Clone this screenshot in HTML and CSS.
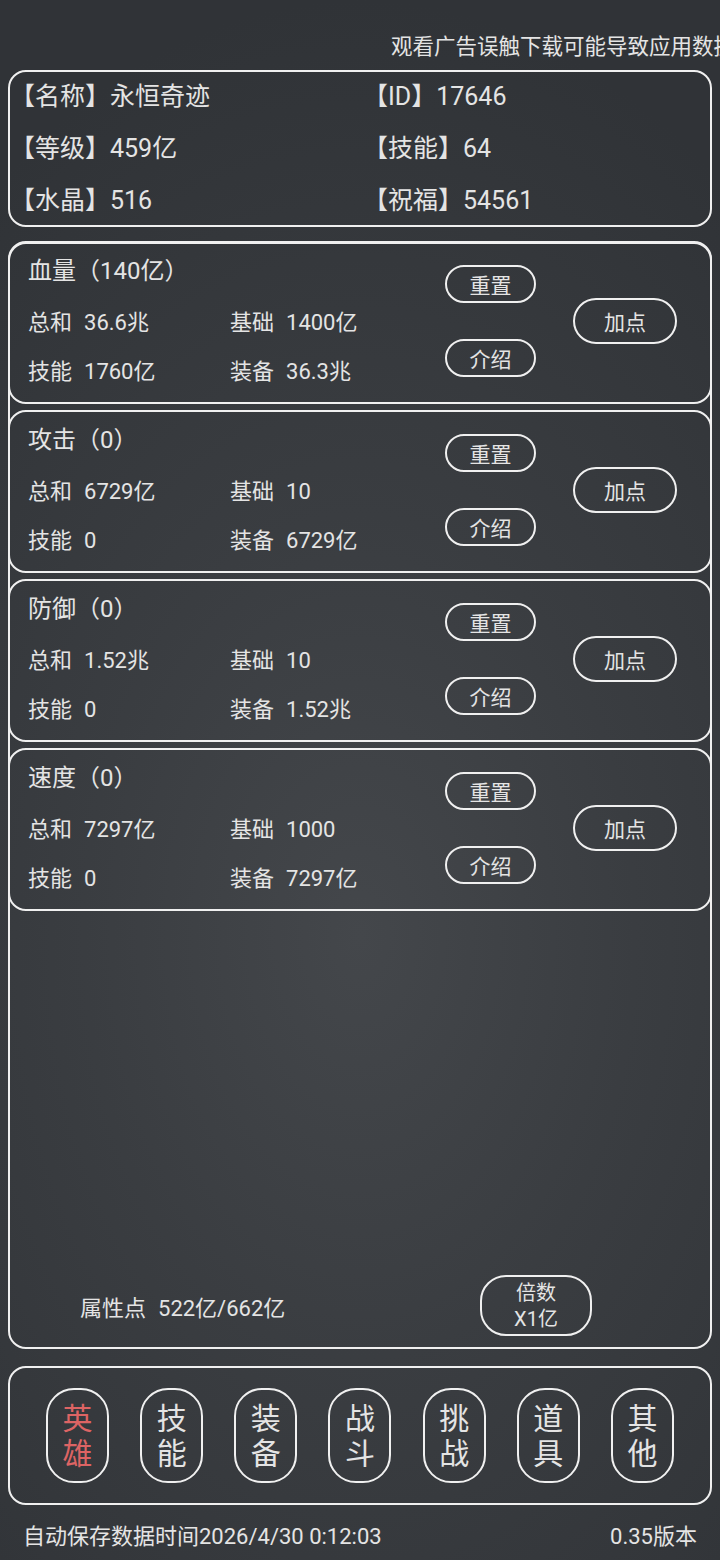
FILE: index.html
```html
<!DOCTYPE html>
<html lang="zh-CN">
<head>
<meta charset="utf-8">
<title>英雄</title>
<link rel="stylesheet" href="styles.css">
</head>
<body>
<div class="app">
  <div class="notice">观看广告误触下载可能导致应用数据丢失</div>

  <section class="info">
    <div class="info-item">【名称】永恒奇迹</div>
    <div class="info-item">【ID】17646</div>
    <div class="info-item">【等级】459亿</div>
    <div class="info-item">【技能】64</div>
    <div class="info-item">【水晶】516</div>
    <div class="info-item">【祝福】54561</div>
  </section>

  <section class="attrs">
    <div class="stat">
      <div class="stat-body">
        <div class="stat-title">血量（140亿）</div>
        <div class="stat-grid">
          <div>总和<span class="val">36.6兆</span></div>
          <div>基础<span class="val">1400亿</span></div>
          <div>技能<span class="val">1760亿</span></div>
          <div>装备<span class="val">36.3兆</span></div>
        </div>
      </div>
      <div class="stat-btns">
        <div class="pill">重置</div>
        <div class="pill">介绍</div>
      </div>
      <div class="pill pill-lg">加点</div>
    </div>

    <div class="stat">
      <div class="stat-body">
        <div class="stat-title">攻击（0）</div>
        <div class="stat-grid">
          <div>总和<span class="val">6729亿</span></div>
          <div>基础<span class="val">10</span></div>
          <div>技能<span class="val">0</span></div>
          <div>装备<span class="val">6729亿</span></div>
        </div>
      </div>
      <div class="stat-btns">
        <div class="pill">重置</div>
        <div class="pill">介绍</div>
      </div>
      <div class="pill pill-lg">加点</div>
    </div>

    <div class="stat">
      <div class="stat-body">
        <div class="stat-title">防御（0）</div>
        <div class="stat-grid">
          <div>总和<span class="val">1.52兆</span></div>
          <div>基础<span class="val">10</span></div>
          <div>技能<span class="val">0</span></div>
          <div>装备<span class="val">1.52兆</span></div>
        </div>
      </div>
      <div class="stat-btns">
        <div class="pill">重置</div>
        <div class="pill">介绍</div>
      </div>
      <div class="pill pill-lg">加点</div>
    </div>

    <div class="stat">
      <div class="stat-body">
        <div class="stat-title">速度（0）</div>
        <div class="stat-grid">
          <div>总和<span class="val">7297亿</span></div>
          <div>基础<span class="val">1000</span></div>
          <div>技能<span class="val">0</span></div>
          <div>装备<span class="val">7297亿</span></div>
        </div>
      </div>
      <div class="stat-btns">
        <div class="pill">重置</div>
        <div class="pill">介绍</div>
      </div>
      <div class="pill pill-lg">加点</div>
    </div>

    <div class="points-row">
      <div class="points">属性点<span class="val">522亿/662亿</span></div>
      <div class="multi">倍数<br>X1亿</div>
    </div>
  </section>

  <nav class="tabs">
    <div class="tab active">英<br>雄</div>
    <div class="tab">技<br>能</div>
    <div class="tab">装<br>备</div>
    <div class="tab">战<br>斗</div>
    <div class="tab">挑<br>战</div>
    <div class="tab">道<br>具</div>
    <div class="tab">其<br>他</div>
  </nav>

  <footer class="footer">
    <span>自动保存数据时间2026/4/30 0:12:03</span>
    <span>0.35版本</span>
  </footer>
</div>
</body>
</html>
```

FILE: styles.css
```css
html, body {
  margin: 0;
  padding: 0;
}

body {
  width: 720px;
  height: 1560px;
  overflow: hidden;
  background: radial-gradient(ellipse 85% 60% at 50% 60%, #44474b 0%, #3a3d41 45%, #303337 100%);
  font-family: Roboto, "Noto Sans CJK SC", sans-serif;
  color: #e4e4e4;
}

.app {
  display: flex;
  flex-direction: column;
  height: 1560px;
  padding: 0 8px;
  box-sizing: border-box;
}

.notice {
  flex: none;
  height: 70px;
  box-sizing: border-box;
  padding-top: 32px;
  padding-left: 383px;
  margin-right: -8px;
  font-size: 21.5px;
  line-height: 30px;
  white-space: nowrap;
  overflow: hidden;
}

.info {
  flex: none;
  height: 157px;
  box-sizing: border-box;
  border: 2px solid #f0f0f0;
  border-radius: 18px;
  display: grid;
  grid-template-columns: 353px 1fr;
  grid-auto-rows: 52px;
  align-content: start;
  align-items: center;
  font-size: 25px;
}

.info-item {
  margin-top: -8px;
}

.attrs {
  flex: 1;
  margin-top: 15px;
  border: 2px solid #f0f0f0;
  border-radius: 18px;
  display: flex;
  flex-direction: column;
}

.stat {
  flex: none;
  height: 163px;
  box-sizing: border-box;
  margin: 6px -2px 0;
  border: 2px solid #f0f0f0;
  border-radius: 18px;
  display: flex;
  align-items: center;
  padding-left: 18px;
}

.stat:first-child {
  margin-top: -3px;
}

.stat-body {
  flex: 1;
  margin-top: -3px;
}

.stat-title {
  font-size: 24px;
  line-height: 30px;
  margin-bottom: 22px;
}

.stat-grid {
  display: grid;
  grid-template-columns: 202px 1fr;
  row-gap: 19px;
  font-size: 22px;
  line-height: 30px;
}

.val {
  margin-left: 12px;
}

.stat-btns {
  display: flex;
  flex-direction: column;
  gap: 36px;
  margin-right: 37px;
  margin-top: -3px;
}

.pill {
  width: 91px;
  height: 38px;
  box-sizing: border-box;
  border: 2px solid #f0f0f0;
  border-radius: 19px;
  display: flex;
  align-items: center;
  justify-content: center;
  font-size: 21px;
}

.pill-lg {
  width: 104px;
  height: 46px;
  border-radius: 23px;
  margin-right: 33px;
  margin-top: -3px;
}

.points-row {
  margin-top: auto;
  margin-bottom: 11px;
  display: flex;
  align-items: center;
  padding-left: 70px;
}

.points {
  width: 400px;
  font-size: 22px;
}

.multi {
  width: 112px;
  height: 61px;
  box-sizing: border-box;
  border: 2px solid #f0f0f0;
  border-radius: 26px;
  display: flex;
  align-items: center;
  justify-content: center;
  text-align: center;
  font-size: 20px;
  line-height: 26px;
}

.tabs {
  flex: none;
  margin-top: 17px;
  height: 139px;
  box-sizing: border-box;
  border: 2px solid #f0f0f0;
  border-radius: 18px;
  display: flex;
  align-items: center;
  justify-content: space-between;
  padding: 0 36px;
}

.tab {
  width: 63px;
  height: 95px;
  box-sizing: border-box;
  border: 2px solid #f0f0f0;
  border-radius: 28px;
  display: flex;
  align-items: center;
  justify-content: center;
  text-align: center;
  font-size: 30px;
  line-height: 35px;
}

.tab.active {
  color: #dd6464;
}

.footer {
  flex: none;
  height: 55px;
  box-sizing: border-box;
  padding: 17px 15px 0;
  display: flex;
  justify-content: space-between;
  font-size: 22px;
  line-height: 30px;
}
```
